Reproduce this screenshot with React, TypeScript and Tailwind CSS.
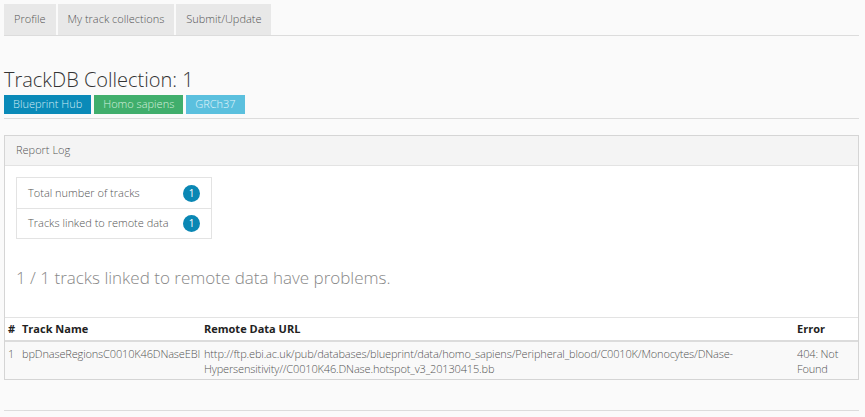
import React from "react";

const tabs = ["Profile", "My track collections", "Submit/Update"];

const stats = [
  { label: "Total number of tracks", count: 1 },
  { label: "Tracks linked to remote data", count: 1 },
];

export default function App() {
  return (
    <div
      className="min-h-screen bg-[#fafafa] text-[#555] text-[11px] font-light px-[4px] pt-[4px]"
      style={{ fontFamily: '"Open Sans", "Liberation Sans", sans-serif' }}
    >
      {/* Tabs */}
      <div className="flex gap-[2px] border-b border-[#dcdcdc] w-[855px]">
        {tabs.map((t) => (
          <div key={t} className="bg-[#e8e8e8] h-[31px] px-[10px] flex items-center text-[#555]">
            {t}
          </div>
        ))}
      </div>

      {/* Title */}
      <h1 className="text-[20px] font-light text-[#333] leading-[24px] mt-[32px]">TrackDB Collection: 1</h1>
      <div className="flex gap-[3px] mt-[3px]">
        <span className="bg-[#0a8ab8] text-[#cfeaf4] h-[19px] px-[9px] flex items-center">Blueprint Hub</span>
        <span className="bg-[#40ae6c] text-[#d5eedd] h-[19px] px-[9px] flex items-center">Homo sapiens</span>
        <span className="bg-[#5bc0de] text-[#e2f4fa] h-[19px] px-[9px] flex items-center">GRCh37</span>
      </div>
      <div className="border-t border-[#dcdcdc] w-[855px] mt-[4px]" />

      {/* Panel */}
      <div className="w-[855px] mt-[16px] border border-[#d5d5d5] bg-white">
        <div className="bg-[#f4f4f4] h-[30px] border-b border-[#e3e3e3] px-[11px] flex items-center text-[#555]">
          Report Log
        </div>
        <div className="px-[11px] pt-[11px]">
          <div className="w-[196px] border border-[#e3e3e3]">
            {stats.map((s, i) => (
              <div
                key={s.label}
                className={`h-[30px] px-[11px] flex items-center justify-between ${i > 0 ? "border-t border-[#e3e3e3]" : ""}`}
              >
                <span className="text-[#555]">{s.label}</span>
                <span className="w-[17px] h-[17px] rounded-full bg-[#0a87b4] text-white text-[10px] font-normal flex items-center justify-center">
                  {s.count}
                </span>
              </div>
            ))}
          </div>
          <h3 className="text-[17px] font-light text-[#888] leading-[22px] mt-[28px]">
            1 / 1 tracks linked to remote data have problems.
          </h3>
        </div>
        <table className="w-full table-fixed mt-[28px] border-collapse">
          <colgroup>
            <col className="w-[17px]" />
            <col className="w-[182px]" />
            <col />
            <col className="w-[61px]" />
          </colgroup>
          <thead>
            <tr className="border-t border-[#e3e3e3] border-b-2 border-b-[#dcdcdc] text-[#222]">
              <th className="text-left font-bold h-[23px] pl-[3px]">#</th>
              <th className="text-left font-bold">Track Name</th>
              <th className="text-left font-bold">Remote Data URL</th>
              <th className="text-left font-bold">Error</th>
            </tr>
          </thead>
          <tbody>
            <tr className="bg-[#f9f9f9] align-top text-[#555] leading-[15px] tracking-[-0.15px]">
              <td className="pl-[3px] pt-[4px] pb-[3px]">1</td>
              <td className="pt-[4px] pb-[3px]">bpDnaseRegionsC0010K46DNaseEBI</td>
              <td className="pt-[4px] pb-[3px] pr-[30px] break-words">
                http://ftp.ebi.ac.uk/pub/databases/blueprint/data/homo_sapiens/Peripheral_blood/C0010K/Monocytes/DNase-Hypersensitivity//C0010K46.DNase.hotspot_v3_20130415.bb
              </td>
              <td className="pt-[4px] pb-[3px]">404: Not Found</td>
            </tr>
          </tbody>
        </table>
      </div>
      <div className="border-t border-[#dcdcdc] w-[855px] mt-[30px]" />
    </div>
  );
}
